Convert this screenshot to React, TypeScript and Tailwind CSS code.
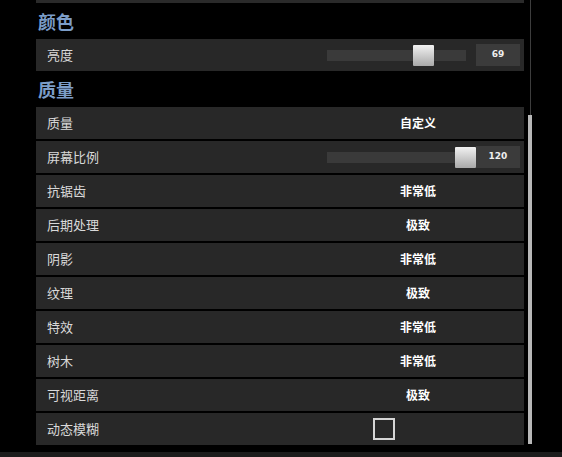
import React from 'react';

const font = { fontFamily: '"Noto Sans CJK SC", "Noto Sans", sans-serif' };

const rows: { label: string; value?: string; slider?: number; check?: boolean }[] = [
  { label: '质量', value: '自定义' },
  { label: '屏幕比例', slider: 120 },
  { label: '抗锯齿', value: '非常低' },
  { label: '后期处理', value: '极致' },
  { label: '阴影', value: '非常低' },
  { label: '纹理', value: '极致' },
  { label: '特效', value: '非常低' },
  { label: '树木', value: '非常低' },
  { label: '可视距离', value: '极致' },
  { label: '动态模糊', check: true },
];

const Slider: React.FC<{ value: number; thumbLeft: string }> = ({ value, thumbLeft }) => (
  <div className="flex items-center w-[204px] h-full">
    <div className="relative ml-[11px] w-[139px] h-[11px] bg-[#3a3a3a]">
      <div
        className={`absolute top-[-5px] w-[21px] h-[21px] rounded-[1px] bg-gradient-to-b from-[#f2f2f2] to-[#a9a9a9] ${thumbLeft}`}
      />
    </div>
    <div className="ml-auto w-[44px] h-[22px] bg-[#3b3b3b] flex items-center justify-center text-[9px] font-bold text-[#eee]" style={{ fontFamily: '"DejaVu Sans", sans-serif' }}>
      {value}
    </div>
  </div>
);

const Row: React.FC<{ label: string; children?: React.ReactNode }> = ({ label, children }) => (
  <div className="h-[32px] bg-[#282828] flex items-center pr-[4px]">
    <div className="flex-1 pl-[11px] text-[13px] text-[#d9d9d9]">{label}</div>
    {children}
  </div>
);

const Heading: React.FC<{ text: string; h: string }> = ({ text, h }) => (
  <div className={`${h} flex items-center pl-[2px] text-[18px] font-bold text-[#7c9dc8]`}>{text}</div>
);

export default function App() {
  return (
    <div className="w-[562px] h-[457px] bg-black flex flex-col overflow-hidden" style={font}>
      <div className="h-[452px] flex">
        <div className="ml-[36px] w-[488px] flex flex-col">
          <div className="h-[3px] bg-[#2a2a2a]" />
          <Heading text="颜色" h="h-[36px]" />
          <Row label="亮度">
            <Slider value={69} thumbLeft="left-[86px]" />
          </Row>
          <Heading text="质量" h="h-[36px]" />
          <div className="flex flex-col gap-[2px]">
            {rows.map((r) => (
              <Row key={r.label} label={r.label}>
                {r.slider !== undefined ? (
                  <Slider value={r.slider} thumbLeft="left-[128px]" />
                ) : r.check ? (
                  <div className="w-[204px] flex">
                    <div className="ml-[57px] w-[22px] h-[22px] border-2 border-[#d6d6d6]" />
                  </div>
                ) : (
                  <div className="w-[204px] text-center text-[12px] font-bold text-white">{r.value}</div>
                )}
              </Row>
            ))}
          </div>
        </div>
        <div className="ml-[4px] w-[4px] flex flex-col">
          <div className="mx-auto w-px h-[115px] bg-[#3d3d3d]" />
          <div className="w-[4px] h-[329px] bg-[#b8b8b8]" />
        </div>
      </div>
      <div className="h-[5px] bg-[#1c1c1c]" />
    </div>
  );
}
